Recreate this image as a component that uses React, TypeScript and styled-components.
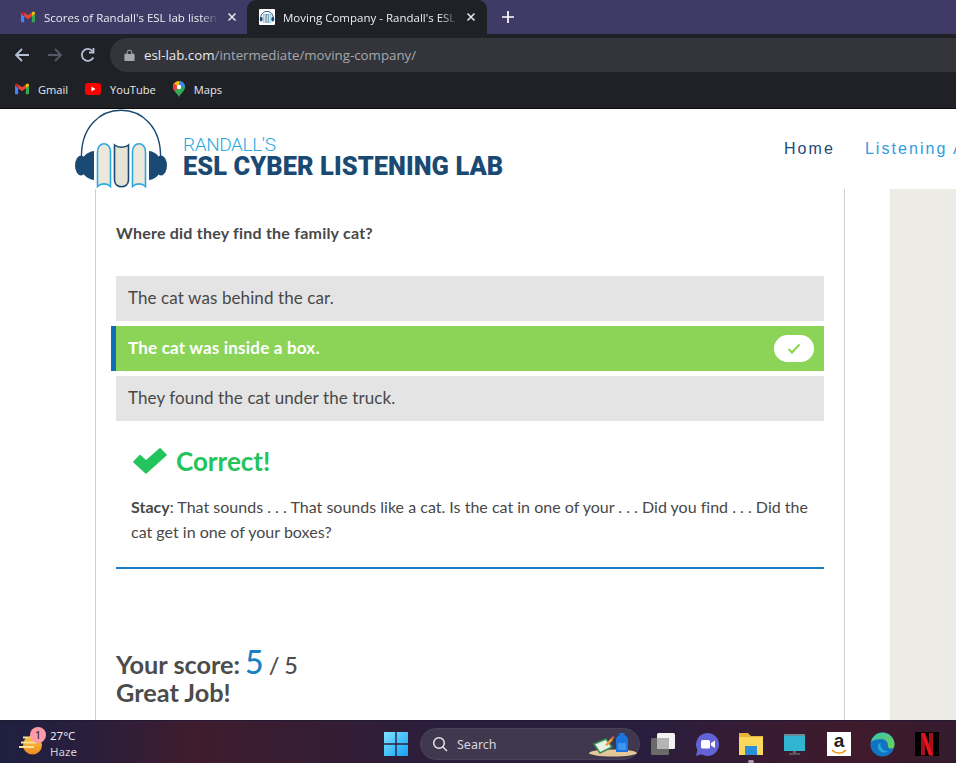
import React from "react";
import styled, { createGlobalStyle } from "styled-components";

const Global = createGlobalStyle`
  html, body { margin: 0; padding: 0; background: #fff; }
  #root { width: 956px; height: 763px; overflow: hidden; }
  * { box-sizing: border-box; }
`;

const Screen = styled.div`
  width: 956px; height: 763px; display: flex; flex-direction: column; overflow: hidden;
  font-family: "Lato", sans-serif;
`;

/* Browser chrome */
const TabStrip = styled.div`
  height: 34px; flex: none; background: #3f3a66; display: flex; align-items: stretch; padding-left: 8px;
  font-family: "Open Sans", "Noto Sans", sans-serif; color: #eceef2; font-size: 11.5px;
`;
const Tab = styled.div<{ $active?: boolean }>`
  width: ${p => (p.$active ? "240px" : "239px")};
  display: flex; align-items: center;
  padding: 0 ${p => (p.$active ? "11px" : "10px")} 0 ${p => (p.$active ? "12px" : "13px")};
  gap: ${p => (p.$active ? "8px" : "9px")};
  border-radius: 9px 9px 0 0;
  background: ${p => (p.$active ? "#202127" : "transparent")};
`;
const TabTitle = styled.span`
  flex: 1; overflow: hidden; white-space: nowrap; -webkit-mask-image: linear-gradient(90deg,#000 90%,transparent 100%);
  mask-image: linear-gradient(90deg,#000 90%,transparent 100%);
`;
const NewTab = styled.div`
  width: 42px; display: flex; align-items: center; justify-content: center;
`;
const Toolbar = styled.div`
  height: 39px; flex: none; background: #202127; display: flex; align-items: center; padding: 3px 0 0 14px; gap: 17px;
`;
const UrlBar = styled.div`
  flex: 1; height: 34px; margin-left: -3px; margin-right: -20px; border-radius: 17px; background: #34353b;
  display: flex; align-items: center; padding-left: 14px; gap: 9px;
  font-family: "Open Sans", "Noto Sans", sans-serif; font-size: 13.3px; color: #a5a8ad;
`;
const Host = styled.span` color: #e8eaed; `;
const Bookmarks = styled.div`
  height: 36px; flex: none; background: #202127; border-bottom: 1px solid #0c0c10; display: flex; align-items: center;
  padding: 0 0 3px 15px; gap: 17px; font-family: "Open Sans", "Noto Sans", sans-serif; font-size: 11.1px; color: #e8eaed;
`;
const Bookmark = styled.div` display: flex; align-items: center; gap: 9px; `;

/* Site header */
const SiteHeader = styled.header`
  height: 80px; flex: none; background: #fff; display: flex; padding-left: 74px; overflow: hidden;
`;
const Logo = styled.div` display: flex; width: 710px; flex: none; `;
const LogoText = styled.div`
  margin: 26px 0 0 13px; display: flex; flex-direction: column;
  font-family: "Roboto", sans-serif;
`;
const LogoTop = styled.span`
  font-size: 19px; line-height: 19px; font-weight: 300; color: #29a9e0; letter-spacing: -0.4px;
`;
const LogoMain = styled.span`
  margin-top: 1px; font-size: 25.4px; line-height: 22px; font-weight: 900; color: #1a4a73; letter-spacing: 0.08px; white-space: nowrap;
`;
const Nav = styled.nav`
  display: flex; gap: 30px; white-space: nowrap; padding-top: 30px;
  font-family: "Liberation Sans", sans-serif; font-size: 16px; letter-spacing: 2.05px;
`;
const NavLink = styled.span<{ $current?: boolean }>`
  color: ${p => (p.$current ? "#1c4a74" : "#2f9be0")};
  line-height: 19px;
`;

/* Body */
const Body = styled.main`
  flex: 1; min-height: 0; display: flex; padding-left: 95px; background: #fff;
`;
const Panel = styled.section`
  width: 750px; flex: none; border-left: 1px solid #cfcfcf; border-right: 1px solid #cfcfcf;
  padding: 34px 20px 0 20px; color: #444;
`;
const Sidebar = styled.aside` width: 66px; margin-left: 45px; flex: none; background: #ecebe6; `;
const Question = styled.h3`
  margin: 0 0 33px; font-size: 16px; line-height: 20px; font-weight: 700; color: #484848; letter-spacing: 0.22px;
`;
const Options = styled.div` display: flex; flex-direction: column; gap: 5px; `;
const Option = styled.div<{ $correct?: boolean }>`
  height: 45px; display: flex; align-items: center; justify-content: space-between;
  background: ${p => (p.$correct ? "#8bd458" : "#e4e4e4")};
  color: ${p => (p.$correct ? "#fff" : "#484848")};
  font-size: 17px; letter-spacing: ${p => (p.$correct ? "0.2px" : "0.1px")}; font-weight: ${p => (p.$correct ? 700 : 400)};
  padding: 0 10px 2px 12px;
  position: relative;
  ${p => p.$correct && `
    &::before { content: ""; position: absolute; left: -5px; top: 0; bottom: 0; width: 5px; background: #0f6fb5; }
  `}
`;
const CheckPill = styled.span`
  width: 40px; height: 27px; margin-bottom: -2px; border-radius: 14px; background: #fff; display: flex; align-items: center; justify-content: center;
`;
const Feedback = styled.div` padding: 24px 0 0 15px; `;
const Verdict = styled.div`
  display: flex; align-items: center; gap: 9px; padding-left: 2px; height: 32px;
  font-size: 26px; font-weight: 700; color: #24c45c;
`;
const Explain = styled.p`
  margin: 17px 0 0 0; font-size: 16px; letter-spacing: 0.01px; line-height: 25px; color: #484848;
  strong { font-weight: 700; }
`;
const Rule = styled.hr`
  margin: 23px 0 0; border: 0; height: 2px; background: #1b7fc2;
`;
const Score = styled.div`
  margin-top: 79px; font-size: 25.3px; line-height: 27px; font-weight: 700; color: #4c4c4c;
`;
const ScoreLine = styled.div` display: flex; align-items: baseline; gap: 5px; `;
const ScoreValue = styled.span` font-size: 32px; line-height: 27px; font-weight: 500; color: #1b7fc2; `;
const ScoreMax = styled.span` font-size: 23.5px; font-weight: 500; word-spacing: -1px; `;

/* Taskbar */
const Taskbar = styled.footer`
  height: 43px; flex: none; display: flex; align-items: center; position: relative; color: #f0f0f0;
  border-top: 1px solid #221b33; padding-top: 4px;
  background: linear-gradient(90deg, #1f2040 0%, #2a1e3c 10%, #3f1c2e 20%, #341d33 34%, #2a1e3e 47%, #2a1e3e 68%, #3a1b30 82%, #3f1a2c 90%, #351b2f 100%);
  font-family: "Noto Sans", "Open Sans", sans-serif;
`;
const Weather = styled.div`
  display: flex; align-items: center; width: 384px; flex: none; padding-left: 19px; gap: 7px; position: relative;
`;
const Badge = styled.span`
  position: absolute; left: 30px; top: -1px; width: 16px; height: 16px; border-radius: 50%;
  background: #ff9aa8; color: #201820; font-size: 10.5px; line-height: 16px; text-align: center;
`;
const WeatherText = styled.div`
  display: flex; flex-direction: column; font-size: 11.5px; line-height: 16px; color: #eee;
`;
const Haze = styled.span` color: #cfcdd4; `;
const SearchBox = styled.div`
  width: 220px; margin-left: 12px; height: 32px; border-radius: 16px; background: #40384f; border: 1px solid #4a4258;
  display: flex; align-items: center; padding-left: 11px; gap: 9px; font-size: 12.5px; color: #d8d6dc;
  position: relative;
`;
const SearchArt = styled.span` position: absolute; right: 0; top: 1px; display: flex; `;
const TrayIcons = styled.div` display: flex; align-items: center; gap: 19px; margin-left: 11px; `;
const TaskIcon = styled.span` width: 25px; height: 25px; display: flex; position: relative; `;
const ActiveDot = styled.span`
  position: absolute; left: 9px; bottom: -6px; width: 6px; height: 3px; background: #a5a0a8; border-radius: 2px;
`;
const AmazonTile = styled.span`
  width: 24px; height: 24px; background: #fff; color: #222; display: flex; flex-direction: column; align-items: center;
  font-family: "Liberation Sans", sans-serif; font-weight: 700; font-size: 19px; line-height: 16px; padding-top: 1px;
`;
const NetflixTile = styled.span`
  width: 24px; height: 24px; background: #000; display: flex; margin-left: 1px;
`;

const GmailIcon = ({ s = 14 }: { s?: number }) => (
  <svg width={s} height={s * 0.8} viewBox="0 0 20 16">
    <path d="M0 3v11.5A1.5 1.5 0 0 0 1.5 16H4.500V7.500z" fill="#4285f4" />
    <path d="M20 3v11.500a1.500 1.500 0 0 1-1.500 1.500H15.500V7.500z" fill="#34a853" />
    <path d="M15.500 2L10 6.200 4.500 2 4.500 7.500 10 11.700l5.500-4.200z" fill="#ea4335" />
    <path d="M0 3.200C0 .8 2.700-.6 4.500 2v5.500L0 4z" fill="#c5221f" />
    <path d="M20 3.200C20 .8 17.300-.6 15.500 2v5.500L20 4z" fill="#fbbc04" />
  </svg>
);

const LogoArt = () => (
  <svg width="96" height="80" viewBox="0 0 96 80">
    <path d="M7.500 50 C5 -15 89 -15 86.500 50" fill="none" stroke="#1a4a73" strokeWidth="1.400" />
    <ellipse cx="7" cy="56.500" rx="6" ry="10" fill="#1a4a73" />
    <path d="M20 42 C12 43 7 49 7 56.500 C7 64 12 70 20 71z" fill="#1a4a73" />
    <ellipse cx="87" cy="56.500" rx="6" ry="10" fill="#1a4a73" />
    <path d="M75 42 C83 43 87 49 87 56.500 C87 64 83 70 75 71z" fill="#1a4a73" />
    <path d="M23.500 77.500 V43 C23.500 32 36.500 32 36.500 43 V77.500 C33 74 27 74 23.500 77.500z" fill="#ece8dc" stroke="#29a9e0" strokeWidth="1.600" />
    <path d="M40.500 36 C44 39 51 39 54.500 36 V71 C54.500 80 40.500 80 40.500 71z" fill="#e6e2d4" stroke="#1a4a73" strokeWidth="1.600" />
    <path d="M58.500 43 C58.500 32 71.500 32 71.500 43 V77.500 C68 74 62 74 58.500 77.500z" fill="#ece8dc" stroke="#29a9e0" strokeWidth="1.600" />
  </svg>
);

const FileTabIcon = () => (
  <svg width="16" height="16" viewBox="0 0 18 18">
    <rect width="18" height="18" rx="1" fill="#fff" />
    <path d="M2 11 C1 0 17 0 16 11" fill="none" stroke="#1a4a73" strokeWidth="1" />
    <rect x="1" y="9" width="3" height="5" rx="1.500" fill="#1a4a73" />
    <rect x="14" y="9" width="3" height="5" rx="1.500" fill="#1a4a73" />
    <rect x="5" y="6" width="2.500" height="9" fill="#cfe5ef" stroke="#29a9e0" strokeWidth=".5" />
    <rect x="8" y="6" width="2.500" height="9" fill="#d8d4c6" stroke="#1a4a73" strokeWidth=".5" />
    <rect x="11" y="6" width="2.500" height="9" fill="#cfe5ef" stroke="#29a9e0" strokeWidth=".5" />
  </svg>
);

const Close = () => (
  <svg width="10" height="10" viewBox="0 0 10 10">
    <path d="M1.500 1.500l7 7M8.500 1.500l-7 7" stroke="#e8eaed" strokeWidth="1.500" />
  </svg>
);

export default function App() {
  return (
    <Screen>
      <Global />
      <TabStrip>
        <Tab>
          <GmailIcon />
          <TabTitle>Scores of Randall's ESL lab listening</TabTitle>
          <Close />
        </Tab>
        <Tab $active>
          <FileTabIcon />
          <TabTitle>Moving Company - Randall's ESL Cyber</TabTitle>
          <Close />
        </Tab>
        <NewTab>
          <svg width="12" height="12" viewBox="0 0 12 12"><path d="M6 0v12M0 6h12" stroke="#fff" strokeWidth="1.700" /></svg>
        </NewTab>
      </TabStrip>
      <Toolbar>
        <svg width="16" height="16" viewBox="0 0 16 16"><path d="M15 8H2M8 2L2 8l6 6" fill="none" stroke="#b4c0d4" strokeWidth="1.800" /></svg>
        <svg width="16" height="16" viewBox="0 0 16 16"><path d="M1 8h13M8 2l6 6-6 6" fill="none" stroke="#54596a" strokeWidth="1.800" /></svg>
        <svg width="16" height="16" viewBox="0 0 16 16"><path d="M13.300 10.500A6 6 0 1 1 12.500 4M13.500 1v4.500H9" fill="none" stroke="#b4c0d4" strokeWidth="1.800" /></svg>
        <UrlBar>
          <svg width="11" height="12" viewBox="0 0 11 12"><path d="M1.500 5h8a.8.8 0 0 1 .8.800v5.400a.8.8 0 0 1-.8.800h-8a.8.8 0 0 1-.8-.8V5.800A.8.8 0 0 1 1.500 5zM3 5V3.500a2.500 2.500 0 0 1 5 0V5" fill="#a5a8ad" stroke="#a5a8ad" strokeWidth=".6" fillRule="nonzero" /><path d="M3.700 5V3.500a1.800 1.800 0 0 1 3.600 0V5z" fill="#34353b" /></svg>
          <span><Host>esl-lab.com</Host>/intermediate/moving-company/</span>
        </UrlBar>
      </Toolbar>
      <Bookmarks>
        <Bookmark><GmailIcon />Gmail</Bookmark>
        <Bookmark>
          <svg width="16" height="12" viewBox="0 0 16 12"><rect width="16" height="12" rx="3" fill="#f00" /><path d="M6.500 3.500v5l4-2.500z" fill="#fff" /></svg>
          YouTube
        </Bookmark>
        <Bookmark>
          <svg width="12" height="16" viewBox="0 0 12 16">
            <path d="M6 0a6 6 0 0 1 6 6c0 4-4 6-6 10C4 12 0 10 0 6a6 6 0 0 1 6-6z" fill="#34a853" />
            <path d="M1 2.500A6 6 0 0 1 6 0v6H0a6 6 0 0 1 1-3.500z" fill="#fbbc04" />
            <path d="M6 0a6 6 0 0 1 6 6H6z" fill="#4285f4" />
            <path d="M1 2.500L6 6 2 10C.5 8.500 0 7.500 0 6a6 6 0 0 1 1-3.500z" fill="#ea4335" />
            <circle cx="6" cy="6" r="2.200" fill="#fff" />
          </svg>
          Maps
        </Bookmark>
      </Bookmarks>

      <SiteHeader>
        <Logo>
          <LogoArt />
          <LogoText>
            <LogoTop>RANDALL'S</LogoTop>
            <LogoMain>ESL CYBER LISTENING LAB</LogoMain>
          </LogoText>
        </Logo>
        <Nav>
          <NavLink $current>Home</NavLink>
          <NavLink>Listening Activities</NavLink>
        </Nav>
      </SiteHeader>

      <Body>
        <Panel>
          <Question>Where did they find the family cat?</Question>
          <Options>
            <Option>The cat was behind the car.</Option>
            <Option $correct>
              The cat was inside a box.
              <CheckPill>
                <svg width="14" height="11" viewBox="0 0 14 11"><path d="M1.500 6l3.500 3.500L12.500 1.500" fill="none" stroke="#84d84a" strokeWidth="2" /></svg>
              </CheckPill>
            </Option>
            <Option>They found the cat under the truck.</Option>
          </Options>
          <Feedback>
            <Verdict>
              <svg width="34" height="26" viewBox="0 0 34 26"><path d="M.9 14L7 7.500l6 5.500L27 .9 33.100 7 13 25z" fill="#24c45c" stroke="#24c45c" strokeWidth="1.600" strokeLinejoin="round" /></svg>
              Correct!
            </Verdict>
            <Explain>
              <strong>Stacy</strong>: That sounds . . . That sounds like a cat. Is the cat in one of your . . . Did you find . . . Did the cat get in one of your boxes?
            </Explain>
          </Feedback>
          <Rule />
          <Score>
            <ScoreLine>
              Your score: <ScoreValue>5</ScoreValue> <ScoreMax>/ 5</ScoreMax>
            </ScoreLine>
            <div>Great Job!</div>
          </Score>
        </Panel>
        <Sidebar />
      </Body>

      <Taskbar>
        <Weather>
          <svg width="24" height="24" viewBox="0 0 24 24">
            <defs>
              <linearGradient id="sun" x1="0" y1="0" x2="0" y2="1"><stop offset="0" stopColor="#f7c948" /><stop offset="1" stopColor="#ee8a1e" /></linearGradient>
            </defs>
            <circle cx="13.500" cy="13" r="9.500" fill="url(#sun)" />
            <path d="M4 5.500h5M2 10.500h15M0 15h15" stroke="#f9e29a" strokeWidth="2" />
          </svg>
          <Badge>1</Badge>
          <WeatherText>
            <span>27°C</span>
            <Haze>Haze</Haze>
          </WeatherText>
        </Weather>
        <svg width="24" height="24" viewBox="0 0 24 24">
          <defs>
            <linearGradient id="win" x1="0" y1="0" x2="1" y2="1"><stop offset="0" stopColor="#7de3ff" /><stop offset="1" stopColor="#12a0f5" /></linearGradient>
          </defs>
          <path d="M0 0h11.300v11.300H0zM12.700 0H24v11.300H12.700zM0 12.700h11.300V24H0zM12.700 12.700H24V24H12.700z" fill="url(#win)" />
        </svg>
        <SearchBox>
          <svg width="16" height="16" viewBox="0 0 16 16"><circle cx="7" cy="7" r="5.300" fill="none" stroke="#e8e6ea" strokeWidth="1.500" /><path d="M11 11l4 4" stroke="#e8e6ea" strokeWidth="1.500" /></svg>
          Search
          <SearchArt>
            <svg width="52" height="30" viewBox="0 0 52 30">
              <ellipse cx="26" cy="23" rx="24" ry="3.500" fill="#e5c79a" />
              <path d="M7 14l12-5 6 8-12 6z" fill="#e9efe4" stroke="#2f8f52" strokeWidth="1.500" />
              <path d="M18 15l6-7 2 2-6 6z" fill="#e8a13a" />
              <path d="M24 8l2-2 1.500 1.500-2 2z" fill="#e25d4a" />
              <path d="M29 10c0-3 2-4 3.500-5V3h5v2c2 1 3.500 2 3.500 5v12H29z" fill="#1c74e0" />
              <rect x="31" y="13" width="8" height="7" rx="1" fill="#3f94ee" />
            </svg>
          </SearchArt>
        </SearchBox>
        <TrayIcons>
          <TaskIcon>
            <svg width="25" height="25" viewBox="0 0 25 25">
              <rect x="0" y="6" width="18" height="17" rx="1.500" fill="#6a6a6a" />
              <rect x="6" y="1" width="18" height="16" rx="1.500" fill="#f2f2f2" />
              <rect x="6" y="6" width="12" height="11" fill="#b4b4b4" />
            </svg>
          </TaskIcon>
          <TaskIcon>
            <svg width="25" height="25" viewBox="0 0 25 25">
              <path d="M12.500 1a11.500 11.500 0 1 1-6 21.300L1 24l1.400-6A11.500 11.500 0 0 1 12.500 1z" fill="#6264d6" />
              <rect x="6" y="8" width="9" height="8.500" rx="1.500" fill="#fff" />
              <path d="M16 11l4-2.500v7.500L16 13.500z" fill="#fff" />
            </svg>
          </TaskIcon>
          <TaskIcon>
            <svg width="25" height="25" viewBox="0 0 25 25">
              <path d="M0 1h9l3 3h12v3H0z" fill="#e8b339" />
              <path d="M0 5h24v18H0z" fill="#fbd75b" />
              <rect x="6" y="14" width="12" height="9" fill="#2a8fd6" />
            </svg>
            <ActiveDot />
          </TaskIcon>
          <TaskIcon>
            <svg width="25" height="25" viewBox="0 0 25 25">
              <rect x="1" y="2" width="21" height="17" fill="#2fb4d2" />
              <rect x="1" y="2" width="21" height="2" fill="#6a8a94" />
              <rect x="10" y="19" width="3" height="2" fill="#666" />
              <rect x="6" y="21" width="11" height="2" fill="#555" />
            </svg>
          </TaskIcon>
          <AmazonTile>
            a
            <svg width="16" height="6" viewBox="0 0 16 6"><path d="M1 1c4 4 10 4 14 0" fill="none" stroke="#f09a1a" strokeWidth="1.600" /></svg>
          </AmazonTile>
          <TaskIcon>
            <svg width="25" height="25" viewBox="0 0 25 25">
              <defs>
                <linearGradient id="edge" x1="0" y1="0" x2="1" y2="1"><stop offset="0" stopColor="#36c3b4" /><stop offset="1" stopColor="#6fd24e" /></linearGradient>
              </defs>
              <circle cx="12.500" cy="12.500" r="12" fill="#1272c4" />
              <path d="M1 10C2.500 3.500 8 .5 12.500.5 19 .5 24.500 6 24.500 12.500c0 2-1 4-3.500 4-3 0-3-2-3-3.500 0-3-3-6-7-6-4 0-8 1-10 3z" fill="url(#edge)" />
              <path d="M10.500 11c-3 1-3.500 5.500-.5 8 2.500 2 6 2 8.500.5-4 0-9-3-8-8.500z" fill="#2aa8dc" />
            </svg>
          </TaskIcon>
          <NetflixTile>
            <svg width="24" height="24" viewBox="0 0 24 24">
              <path d="M6 1h4v22l-4 .5zM14 1h4v22.500l-4-.5z" fill="#a80f16" />
              <path d="M6 1h4l8 22.500h-4z" fill="#e0141c" />
            </svg>
          </NetflixTile>
        </TrayIcons>
      </Taskbar>
    </Screen>
  );
}
